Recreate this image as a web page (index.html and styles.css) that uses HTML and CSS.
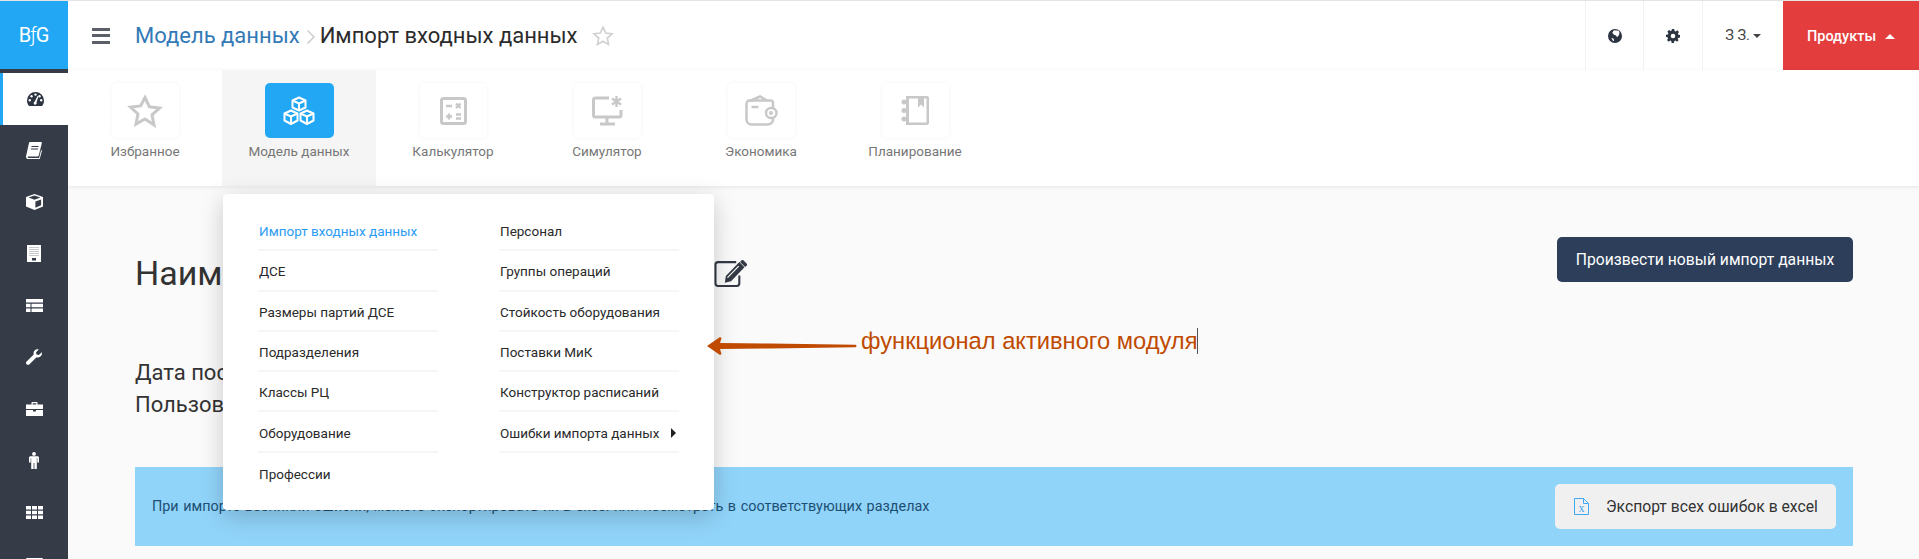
FILE: index.html
```html
<!DOCTYPE html>
<html lang="ru">
<head>
  <meta charset="UTF-8">
  <meta name="viewport" content="width=device-width, initial-scale=1.0">
  <title>Импорт входных данных</title>
  <link rel="stylesheet" href="styles.css">
</head>
<body>
  <aside class="sidebar">
    <div class="logo">B<span class="logo-slash">ƒ</span>G</div>
    <ul class="side-menu">
      <li class="side-item active">
        <svg width="17" height="14" viewBox="0 0 17 14"><path fill="#2b3440" d="M8.500 0a8.500 8.500 0 0 1 8.500 8.500c0 2-.7 3.900-2 5.500H2C.7 12.400 0 10.500 0 8.500A8.500 8.500 0 0 1 8.500 0z"/><g fill="#fff"><circle cx="8.500" cy="2.600" r="1.200"/><circle cx="4.500" cy="4.300" r="1.200"/><circle cx="12.500" cy="4.300" r="1.200"/><circle cx="2.800" cy="8.300" r="1.200"/><circle cx="14.200" cy="8.300" r="1.200"/><path d="M7.600 9.800 10.500 4l.9.400-1.900 6.100a1.500 1.500 0 1 1-1.900-.7z"/></g></svg>
      </li>
      <li class="side-item">
        <svg width="16" height="17" viewBox="0 0 16 17"><path fill="#fff" d="M4 0h11c.7 0 1 .5.800 1.200l-3 12c-.2.700-.8 1.300-1.600 1.300H2.500c-.6 0-.9.300-.9.700s.3.800.9.800h10.600l2-8 .9.600-2.300 8.500c-.1.500-.5.900-1 .9H2.400C1 17 0 16 0 14.700c0-.3 0-.5.100-.8L3 1C3.100.400 3.500 0 4 0z"/><path fill="#353c48" d="M5.500 4h7v1h-7zM5 6.500h7v1H5z"/></svg>
      </li>
      <li class="side-item">
        <svg width="17" height="16" viewBox="0 0 17 16"><path fill="#fff" d="M8.500 0 17 3v9.500L8.500 16 0 12.500V3zM2.600 3.600l5.900 2.200 5.900-2.200-5.900-2.100zM9.400 13.800l5.700-2.500V5.500L9.400 7.600z"/></svg>
      </li>
      <li class="side-item">
        <svg width="14" height="17" viewBox="0 0 14 17"><rect width="14" height="17" fill="#fff"/><g fill="none" stroke="#8d939c" stroke-width="1" stroke-dasharray="1 1"><path d="M2.500 2.500h9M2.500 4.500h9M2.500 6.500h9M2.500 8.500h9M2.500 10.500h9"/></g><rect x="5" y="13" width="4" height="2.500" fill="#353c48"/></svg>
      </li>
      <li class="side-item">
        <svg width="17" height="13" viewBox="0 0 17 13"><path fill="#fff" d="M0 0h17v3.600H0zM0 4.700h4.500v3.600H0zM5.500 4.700H17v3.600H5.500zM0 9.400h4.500V13H0zM5.500 9.400H17V13H5.500z"/></svg>
      </li>
      <li class="side-item">
        <svg width="16" height="16" viewBox="0 0 16 16"><path fill="#fff" d="M15.800 3.200c.5 2-.3 4-2.100 4.900-1 .5-2.100.5-3.100.2L3.200 15.500c-.6.600-1.600.6-2.200 0l-.6-.6c-.6-.6-.6-1.600 0-2.200l7.300-7.300c-.4-1.300-.1-2.800.9-3.900C9.500.5 11.200 0 12.800.400L10 3.200l.5 2.300 2.300.5z"/></svg>
      </li>
      <li class="side-item">
        <svg width="17" height="14" viewBox="0 0 17 14"><path fill="#fff" d="M5.500 2.500V1c0-.6.400-1 1-1h4c.6 0 1 .4 1 1v1.500H17v4.500H0V2.500zM6.700 1.200v1.300h3.600V1.200zM0 8h7v1.500h3V8h7v6H0z"/></svg>
      </li>
      <li class="side-item">
        <svg width="10" height="17" viewBox="0 0 10 17"><circle cx="5" cy="1.900" r="1.900" fill="#fff"/><path fill="#fff" d="M1.500 4.300h7C9.400 4.300 10 5 10 5.800v4.700H8.300V6.300h-.5V17H5.400v-6h-.8v6H2.200V6.300h-.5v4.200H0V5.800c0-.8.600-1.500 1.500-1.500z"/></svg>
      </li>
      <li class="side-item">
        <svg width="17" height="13" viewBox="0 0 17 13"><path fill="#fff" d="M0 0h5v3.600H0zM6 0h5v3.600H6zM12 0h5v3.600h-5zM0 4.700h5v3.600H0zM6 4.700h5v3.600H6zM12 4.700h5v3.600h-5zM0 9.400h5V13H0zM6 9.400h5V13H6zM12 9.400h5V13h-5z"/></svg>
      </li>
      <li class="side-item">
        <svg width="17" height="13" viewBox="0 0 17 13"><rect width="17" height="13" rx="1" fill="#fff"/></svg>
      </li>
    </ul>
  </aside>

  <div class="page">
    <header class="topbar">
      <button class="burger" type="button"><span></span><span></span><span></span></button>
      <div class="crumbs">
        <a class="crumb-link" href="#">Модель данных</a>
        <span class="crumb-sep">
          <svg width="10" height="16" viewBox="0 0 10 16"><path fill="none" stroke="#c9c9c9" stroke-width="1.400" d="M1.500 1.500 8 8l-6.500 6.500"/></svg>
        </span>
        <span class="crumb-current">Импорт входных данных</span>
        <svg class="crumb-star" width="22" height="21" viewBox="0 0 22 21"><path fill="none" stroke="#cfcfcf" stroke-width="1.600" d="M11 2.200l2.700 5.900 6.300.7-4.700 4.300 1.300 6.300L11 16.200l-5.600 3.200 1.300-6.300L2 8.800l6.300-.7z"/></svg>
      </div>
      <div class="top-actions">
        <div class="top-cell cell-globe">
          <svg width="14" height="14" viewBox="0 0 14 14"><circle cx="7" cy="7" r="7" fill="#2b3440"/><path fill="#fff" d="M6 1.200l4.700.6c.9 1.300 1 2.500.3 4.200L9 8.200 8 6.500 5.600 5.600 4.300 3.500zM3.300 8.800l2.400 1 .4 2.400-1.400-.6z"/></svg>
        </div>
        <div class="top-cell cell-gear">
          <svg width="14" height="14" viewBox="0 0 14 14"><path fill="#2b3440" fill-rule="evenodd" d="M5.800 0h2.400l.4 1.900 1.100.5L11.300 1.300 13 3l-1.100 1.600.5 1.100 1.600.4v2.400l-1.900.4-.5 1.100L12.700 11 11 12.700l-1.600-1.100-1.100.5-.4 1.900H5.600l-.3-1.900-1.100-.5L2.700 12.700 1 11l1.100-1.600-.5-1.100L0 8V5.800l1.900-.4.500-1.100L1.300 2.700 3 1l1.600 1.100 1.100-.5zM7 4.700a2.300 2.300 0 1 0 0 4.600 2.300 2.300 0 0 0 0-4.600z"/></svg>
        </div>
        <div class="top-cell cell-user">З З.<span class="caret-down"></span></div>
        <button class="products-btn" type="button">Продукты<span class="caret-up"></span></button>
      </div>
    </header>

    <nav class="modules">
      <a class="module" href="#">
        <span class="module-icon">
          <svg width="36" height="34" viewBox="0 0 36 34"><path fill="none" stroke="#c8c8c8" stroke-width="3" d="M18 3.500l4.400 9.300 10.100 1.200-7.500 6.900 2 10L18 25l-9 5 2-10-7.500-6.900 10.100-1.200z"/></svg>
        </span>
        <span class="module-label">Избранное</span>
      </a>
      <a class="module selected" href="#">
        <span class="module-icon">
          <svg width="32" height="30" viewBox="0 0 32 30" fill="none" stroke="#fff" stroke-width="2" stroke-linejoin="round"><path d="M16 1.500l6.500 3v7L16 14.500l-6.500-3v-7z"/><path d="M9.500 4.500 16 7.500l6.500-3M16 7.500v7"/><path d="M8 14.500l6.500 3v7L8 28l-6.500-3.500v-7z"/><path d="M1.500 17.500 8 20.500l6.500-3M8 20.500V28"/><path d="M24 14.500l6.500 3v7L24 28l-6.500-3.500v-7z"/><path d="M17.500 17.500l6.500 3 6.500-3M24 20.500V28"/></svg>
        </span>
        <span class="module-label">Модель данных</span>
      </a>
      <a class="module" href="#">
        <span class="module-icon">
          <svg width="27" height="28" viewBox="0 0 27 28" fill="none" stroke="#c8c8c8"><rect x="1.500" y="1.500" width="24" height="25" rx="2" stroke-width="3"/><path stroke-width="2.400" d="M6 9h6M16 6.500l4.500 4.500M20.500 6.500 16 11M6 19.500h6M9 16.500v6M16 17.500h5M16 21.500h5"/></svg>
        </span>
        <span class="module-label">Калькулятор</span>
      </a>
      <a class="module" href="#">
        <span class="module-icon">
          <svg width="31" height="31" viewBox="0 0 31 31" fill="none" stroke="#c8c8c8"><path stroke-width="3" d="M17 3H3.500C2.400 3 1.500 3.900 1.500 5v15c0 1.100.9 2 2 2H27c1.100 0 2-.9 2-2v-5"/><path stroke-width="3" d="M15 22v6M8 29h15"/><path stroke-width="2.400" d="M24.500 1v11M20 3.500l9 6M29 3.500l-9 6"/></svg>
        </span>
        <span class="module-label">Симулятор</span>
      </a>
      <a class="module" href="#">
        <span class="module-icon">
          <svg width="33" height="31" viewBox="0 0 33 31" fill="none" stroke="#c8c8c8" stroke-width="2.500"><path d="M28 13V8c0-1.500-1-2.500-2.500-2.500h-21C3 5.500 1.500 7 1.500 9v15c0 3 2 5.500 5 5.500h16c3 0 5.500-2 5.500-5v-1"/><path d="M5 6 15 1.500 22 5.500"/><path d="M6.500 12h7"/><rect x="21" y="13" width="10.500" height="10" rx="5"/><circle cx="26" cy="18" r=".8"/></svg>
        </span>
        <span class="module-label">Экономика</span>
      </a>
      <a class="module" href="#">
        <span class="module-icon">
          <svg width="28" height="31" viewBox="0 0 28 31" fill="#c8c8c8"><path fill-rule="evenodd" d="M5 1h21c1.100 0 2 .9 2 2v25c0 1.100-.9 2-2 2H5zM8 3.500v24h17.500v-24H23v9l-3-3-3 3v-9z"/><circle cx="3" cy="7" r="2.500"/><circle cx="3" cy="15.500" r="2.500"/><circle cx="3" cy="24" r="2.500"/></svg>
        </span>
        <span class="module-label">Планирование</span>
      </a>
    </nav>

    <main class="content">
      <div class="title-row">
        <h1 class="page-title">
          Наим
          <svg class="edit-icon" width="35" height="28" viewBox="0 0 33 27"><path fill="none" stroke="#333a44" stroke-width="2" d="M22 3H4.500C3 3 2 4 2 5.500v18C2 25 3 26 4.500 26h18c1.500 0 2.500-1 2.500-2.500V16"/><path fill="#333a44" d="M11 23l1-6.500L25 3l5 5L17 21.500zM27 1.500c.6-.6 1.500-.6 2.100 0l2.900 2.900c.6.600.6 1.500 0 2.100L30.700 7.800l-5-5z"/><path fill="#fff" d="M13.200 17.500 24 6.500l.8.800-10.800 11z"/></svg>
        </h1>
        <button class="btn-dark" type="button">Произвести новый импорт данных</button>
      </div>

      <div class="import-info">
        <div>Дата пос</div>
        <div>Пользов</div>
      </div>

      <div class="alert">
        <span class="alert-text">При импорте возникли ошибки, можете экспортировать их в excel или посмотреть в соответствующих разделах</span>
        <button class="btn-export" type="button">
          <svg width="15" height="17" viewBox="0 0 15 17"><path fill="none" stroke="#41a9f2" d="M.5.500h9l5 5v11H.500zM9.500.500v5h5"/><text class="xls-mark" x="7.500" y="14" text-anchor="middle">x</text></svg>
          Экспорт всех ошибок в excel
        </button>
      </div>
    </main>
  </div>

  <div class="dropdown">
    <ul class="dropdown-col">
      <li class="current"><a href="#">Импорт входных данных</a></li>
      <li><a href="#">ДСЕ</a></li>
      <li><a href="#">Размеры партий ДСЕ</a></li>
      <li><a href="#">Подразделения</a></li>
      <li><a href="#">Классы РЦ</a></li>
      <li><a href="#">Оборудование</a></li>
      <li class="last"><a href="#">Профессии</a></li>
    </ul>
    <ul class="dropdown-col">
      <li><a href="#">Персонал</a></li>
      <li><a href="#">Группы операций</a></li>
      <li><a href="#">Стойкость оборудования</a></li>
      <li><a href="#">Поставки МиК</a></li>
      <li><a href="#">Конструктор расписаний</a></li>
      <li class="has-sub"><a href="#">Ошибки импорта данных</a><span class="caret-right"></span></li>
    </ul>
  </div>

  <!-- annotation drawn over the screenshot -->
  <div class="note">
    <svg class="note-arrow" width="150" height="20" viewBox="0 0 150 20"><path fill="#bf4a00" d="M0 10 13 1l1.500 1-1.500 5 50 .5 85 1.200c.7 0 1.500.5 1.500 1.300s-.8 1.300-1.500 1.300L63 12.500l-50 .5 1.500 5-1.500 1z"/></svg>
    <span class="note-text">функционал активного модуля</span>
    <span class="note-cursor"></span>
  </div>
</body>
</html>
```

FILE: styles.css
```css
* {
  box-sizing: border-box;
}

html, body {
  height: 100%;
}

body {
  display: flex;
  margin: 0;
  overflow: hidden;
  border-top: 1px solid #e4e4e4;
  font-family: Roboto, Arial, sans-serif;
  font-size: 14px;
  color: #333;
  background-color: #fafafa;
}

a {
  color: inherit;
  text-decoration: none;
}

ul {
  list-style: none;
  margin: 0;
  padding: 0;
}

button {
  font-family: inherit;
  cursor: pointer;
}

/* sidebar */
.sidebar {
  flex: 0 0 68px;
  overflow: hidden;
  background-color: #353c48;
}

.logo {
  display: flex;
  justify-content: center;
  align-items: center;
  height: 68px;
  font-size: 20px;
  color: #fff;
  background-color: #22a7f5;
}

.logo-slash {
  margin: 0 -1px;
  font-weight: 300;
}

.side-menu {
  padding-top: 4px;
}

.side-item {
  display: flex;
  justify-content: center;
  align-items: center;
  height: 51.7px;
}

.side-item.active {
  background-color: #fff;
  border-left: 3px solid #22a7f5;
}

/* top bar */
.page {
  flex: 1;
  min-width: 0;
  overflow: hidden;
}

.topbar {
  display: flex;
  align-items: center;
  height: 69px;
  background-color: #fff;
  box-shadow: 0 1px 3px rgba(0, 0, 0, 0.08);
  position: relative;
}

.burger {
  display: flex;
  flex-direction: column;
  gap: 3.500px;
  width: 18px;
  margin-left: 24px;
  padding: 0;
  border: none;
  background: none;
}

.burger span {
  height: 3px;
  background-color: #5c6068;
}

.crumbs {
  display: flex;
  align-items: center;
  margin-left: 25px;
  font-size: 22px;
}

.crumb-link {
  color: #337ab7;
}

.crumb-sep {
  display: flex;
  margin: 2px 4px 0 6px;
}

.crumb-current {
  color: #2b2b2b;
}

.crumb-star {
  margin-left: 14px;
}

.top-actions {
  display: flex;
  align-items: stretch;
  align-self: stretch;
  margin-left: auto;
}

.top-cell {
  display: flex;
  justify-content: center;
  align-items: center;
  border-left: 1px solid #f2f2f2;
}

.cell-globe {
  width: 58px;
}

.cell-gear {
  width: 59px;
}

.cell-user {
  width: 81px;
  color: #444;
  font-size: 14.5px;
}

.caret-down {
  margin-left: 3px;
  border-top: 4px solid #444;
  border-left: 4px solid transparent;
  border-right: 4px solid transparent;
}

.products-btn {
  display: flex;
  align-items: center;
  justify-content: center;
  width: 136px;
  height: 70px;
  padding: 0;
  border: none;
  font-size: 14.5px;
  font-weight: 500;
  color: #fff;
  background-color: #e33d3d;
}

.caret-up {
  margin-left: 9px;
  border-bottom: 5px solid #fff;
  border-left: 5px solid transparent;
  border-right: 5px solid transparent;
}

/* module tiles */
.modules {
  display: flex;
  height: 116px;
  background-color: #fff;
  box-shadow: 0 1px 4px rgba(0, 0, 0, 0.09);
  position: relative;
}

.module {
  display: flex;
  flex-direction: column;
  align-items: center;
  width: 154px;
  padding-top: 13px;
}

.module.selected {
  background-color: #f5f5f5;
}

.module-icon {
  display: flex;
  justify-content: center;
  align-items: center;
  width: 67px;
  height: 55px;
  border-radius: 5px;
  background-color: #fff;
  box-shadow: 0 0 4px rgba(0, 0, 0, 0.05);
}

.selected .module-icon {
  width: 69px;
  background-color: #22a7f5;
  box-shadow: none;
}

.module-label {
  margin-top: 5px;
  font-size: 13.5px;
  line-height: 16px;
  color: #777;
}

/* main content */
.content {
  padding: 51px 66px 0 67px;
}

.title-row {
  display: flex;
  justify-content: space-between;
  align-items: flex-start;
}

.page-title {
  display: flex;
  align-items: center;
  margin: 0;
  font-size: 34px;
  font-weight: 400;
  line-height: 72px;
  color: #333;
}

.edit-icon {
  margin-left: 490px;
}

.btn-dark {
  height: 45px;
  width: 296px;
  padding: 0;
  border: none;
  border-radius: 5px;
  font-size: 15.7px;
  color: #fff;
  background-color: #2c3e5a;
}

.import-info {
  margin-top: 48px;
  font-size: 22px;
  line-height: 32px;
  color: #333;
}

.alert {
  display: flex;
  justify-content: space-between;
  align-items: center;
  height: 79px;
  margin-top: 46px;
  padding: 0 17px;
  background-color: #91d4fa;
  color: #1d4f73;
}

.alert-text {
  font-size: 14.4px;
  word-spacing: 1px;
}

.btn-export {
  display: flex;
  align-items: center;
  gap: 17px;
  width: 281px;
  height: 45px;
  padding: 0 0 0 19px;
  border: none;
  border-radius: 5px;
  font-size: 15.7px;
  color: #333;
  background-color: #f0f0f0;
}

.xls-mark {
  font-family: "Liberation Serif", serif;
  font-size: 12px;
  fill: #41a9f2;
}

/* dropdown over the page */
.dropdown {
  position: absolute;
  left: 223px;
  top: 194px;
  display: flex;
  gap: 61px;
  width: 491px;
  height: 316px;
  padding: 17px 35px 0;
  border-radius: 4px;
  background-color: #fff;
  box-shadow: 0 6px 24px rgba(0, 0, 0, 0.2);
}

.dropdown-col {
  width: 180px;
}

.dropdown-col li {
  display: flex;
  justify-content: space-between;
  align-items: center;
  height: 40.300px;
  padding: 2px 3px 0 1px;
  border-bottom: 2px solid #f6f6f6;
  font-size: 13.5px;
  color: #2a2a2a;
}

.dropdown-col li.current {
  color: #2b9bf4;
}

.dropdown-col li.last {
  border-bottom: none;
}

.caret-right {
  border-left: 5px solid #222;
  border-top: 5px solid transparent;
  border-bottom: 5px solid transparent;
}

/* annotation */
.note {
  position: absolute;
  left: 707px;
  top: 326px;
  display: flex;
  align-items: center;
  height: 30px;
}

.note-arrow {
  margin-top: 10px;
}

.note-text {
  margin-left: 4px;
  font-family: "Liberation Sans", Arial, sans-serif;
  font-size: 23.7px;
  color: #bf4a00;
}

.note-cursor {
  width: 1px;
  height: 26px;
  background-color: #555;
}
```
